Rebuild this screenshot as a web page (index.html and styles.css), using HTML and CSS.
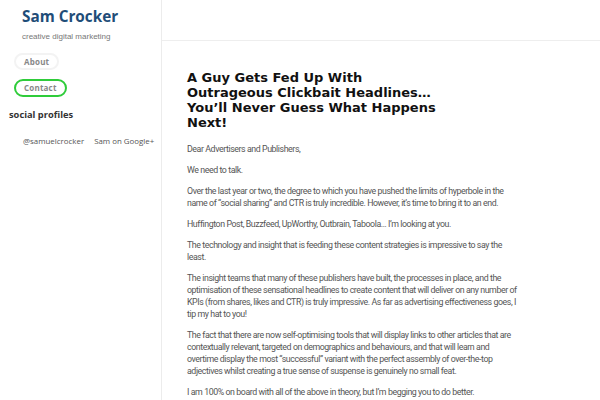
FILE: index.html
```html
<!DOCTYPE html>
<html lang="en">
<head>
<meta charset="utf-8">
<title>Sam Crocker</title>
<link rel="stylesheet" href="styles.css">
</head>
<body>
<div class="page">
  <aside class="sidebar">
    <h1 class="site-title">Sam Crocker</h1>
    <p class="tagline">creative digital marketing</p>
    <nav class="menu">
      <a class="pill" href="#">About</a>
      <a class="pill pill-focus" href="#">Contact</a>
    </nav>
    <h2 class="widget-title">social profiles</h2>
    <ul class="social">
      <li><a href="#">@samuelcrocker</a></li>
      <li><a href="#">Sam on Google+</a></li>
    </ul>
  </aside>
  <main class="main">
    <header class="topbar"></header>
    <article class="post">
      <h2 class="post-title">A Guy Gets Fed Up With Outrageous Clickbait Headlines… You’ll Never Guess What Happens Next!</h2>
      <div class="post-body">
        <p>Dear Advertisers and Publishers,</p>
        <p>We need to talk.</p>
        <p>Over the last year or two, the degree to which you have pushed the limits of hyperbole in the name of “social sharing” and CTR is truly incredible. However, it’s time to bring it to an end.</p>
        <p>Huffington Post, Buzzfeed, UpWorthy, Outbrain, Taboola… I’m looking at you.</p>
        <p>The technology and insight that is feeding these content strategies is impressive to say the least.</p>
        <p>The insight teams that many of these publishers have built, the processes in place, and the optimisation of these sensational headlines to create content that will deliver on any number of KPIs (from shares, likes and CTR) is truly impressive. As far as advertising effectiveness goes, I tip my hat to you!</p>
        <p>The fact that there are now self-optimising tools that will display links to other articles that are contextually relevant, targeted on demographics and behaviours, and that will learn and overtime display the most “successful” variant with the perfect assembly of over-the-top adjectives whilst creating a true sense of suspense is genuinely no small feat.</p>
        <p>I am 100% on board with all of the above in theory, but I’m begging you to do better.</p>
      </div>
    </article>
  </main>
</div>
</body>
</html>
```
FILE: styles.css
```css
html, body {
  margin: 0;
  padding: 0;
  background: #fff;
}
body {
  height: 400px;
  overflow: hidden;
}
.page {
  display: flex;
  min-height: 400px;
}
.sidebar {
  width: 162px;
  flex: 0 0 162px;
  border-right: 1px solid #ececec;
  box-sizing: border-box;
  min-height: 400px;
  padding-top: 6px;
}
.site-title {
  margin: 0 0 0 22px;
  font-family: "Open Sans", sans-serif;
  font-weight: 700;
  font-size: 15.3px;
  line-height: 20px;
  color: #1f4d78;
}
.tagline {
  margin: 5px 0 0 22px;
  font-family: "Liberation Sans", Arial, sans-serif;
  font-size: 8px;
  line-height: 12px;
  color: #777;
}
.menu {
  display: flex;
  flex-direction: column;
  align-items: flex-start;
  gap: 9px;
  margin: 10px 0 0 14px;
}
.pill {
  display: block;
  height: 17px;
  line-height: 13px;
  box-sizing: border-box;
  padding: 0 8px;
  border: 2px solid #f3f3f3;
  border-radius: 9px;
  font-family: "Open Sans", sans-serif;
  font-weight: 700;
  font-size: 8px;
  color: #888;
  text-decoration: none;
  letter-spacing: 0.2px;
}
.pill-focus {
  border-color: #2fcc3a;
  height: 18px;
}
.widget-title {
  margin: 11px 0 0 9px;
  font-family: "Open Sans", sans-serif;
  font-weight: 700;
  font-size: 9.3px;
  line-height: 14px;
  color: #333;
}
.social {
  list-style: none;
  display: flex;
  gap: 10px;
  margin: 8px 0 0 23px;
  padding: 0;
}
.social a {
  font-family: "Open Sans", sans-serif;
  font-size: 7.9px;
  line-height: 12px;
  color: #555;
  text-decoration: none;
}
.main {
  flex: 1;
  min-width: 0;
}
.topbar {
  height: 40px;
  border-bottom: 1px solid #eeeeee;
}
.post {
  padding: 0 0 0 25px;
}
.post-title {
  width: 252px;
  margin: 29px 0 0 0;
  font-family: "DejaVu Sans", sans-serif;
  font-weight: 700;
  font-size: 13px;
  line-height: 15px;
  color: #111;
}
.post-body {
  width: 331px;
  margin-top: 13px;
  font-family: Roboto, "Liberation Sans", sans-serif;
  font-size: 8.8px;
  letter-spacing: -0.42px;
  line-height: 12px;
  color: #555;
}
.post-body p {
  margin: 0 0 9px 0;
}
```
